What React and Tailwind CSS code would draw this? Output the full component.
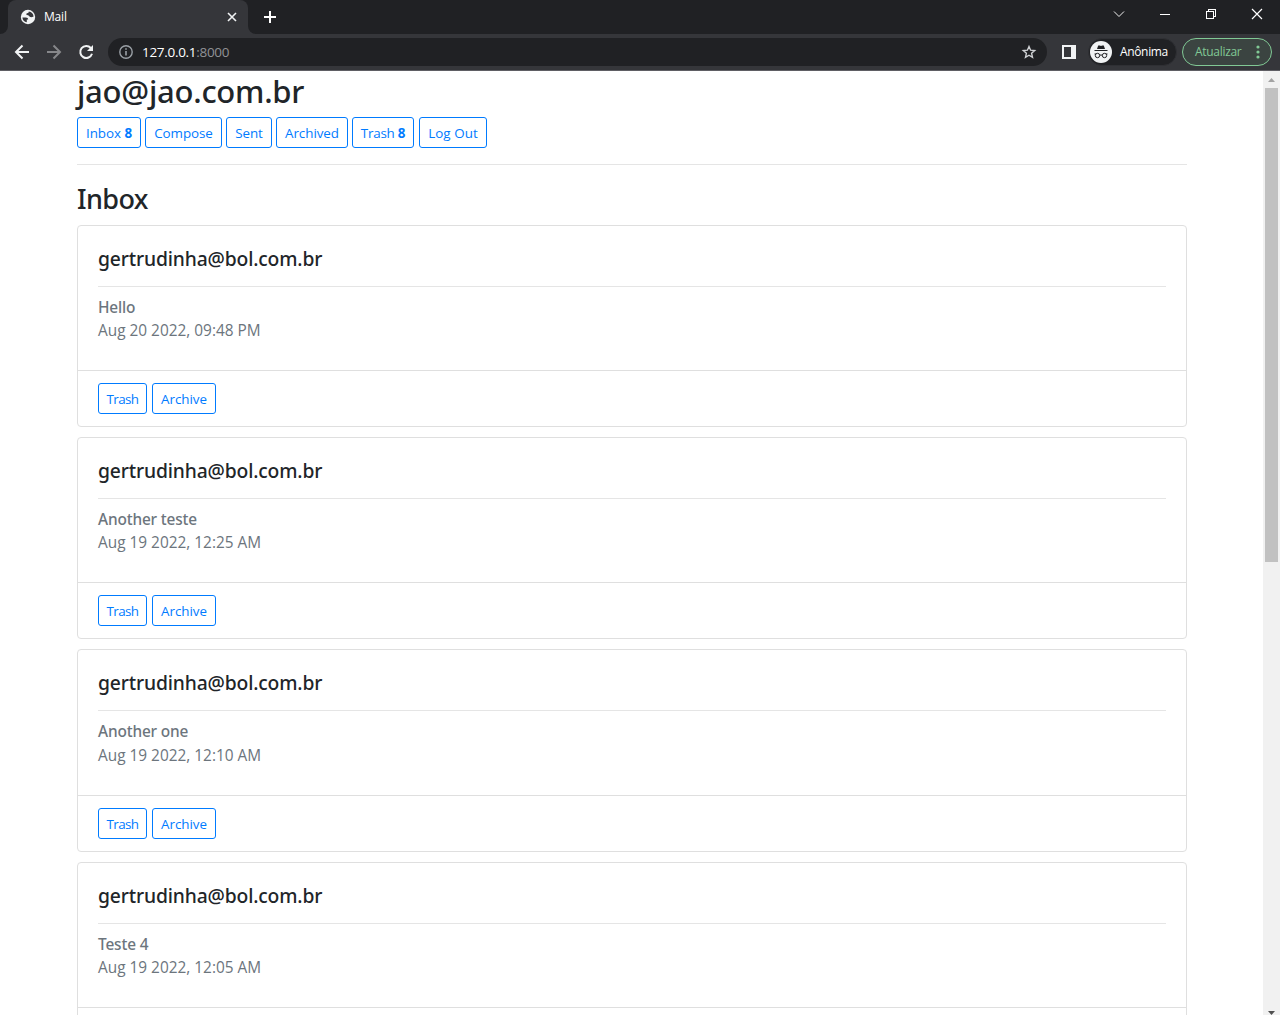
const nav = [
  { label: 'Inbox', count: 8, size: 'w-16 tracking-[-0.05px]', gap: 'mr-1' },
  { label: 'Compose', size: 'w-[77px] tracking-[-0.05px]', gap: 'mr-1' },
  { label: 'Sent', size: 'w-[46px] tracking-[-0.05px]', gap: 'mr-1' },
  { label: 'Archived', size: 'w-[72px] tracking-[-0.05px]', gap: 'mr-1' },
  { label: 'Trash', count: 8, size: 'w-[62px] tracking-[-0.25px]', gap: 'mr-[5px]' },
  { label: 'Log Out', size: 'w-[68px] tracking-[0.05px]', gap: '' },
];

const mails = [
  { from: 'gertrudinha@bol.com.br', subject: 'Hello', date: 'Aug 20 2022, 09:48 PM', body: 'h-[145px]', dateGap: 'mt-[2px]', actions: true },
  { from: 'gertrudinha@bol.com.br', subject: 'Another teste', date: 'Aug 19 2022, 12:25 AM', body: 'h-[145px]', dateGap: 'mt-[2px]', actions: true },
  { from: 'gertrudinha@bol.com.br', subject: 'Another one', date: 'Aug 19 2022, 12:10 AM', body: 'h-[146px]', dateGap: 'mt-[3px]', actions: true },
  { from: 'gertrudinha@bol.com.br', subject: 'Teste 4', date: 'Aug 19 2022, 12:05 AM', body: 'h-[145px]', dateGap: 'mt-[2px]', actions: false },
];

function OutlineButton({ size, gap, children }) {
  return (
    <button className={`flex h-[31px] shrink-0 items-center justify-center whitespace-pre rounded-[3px] border border-[#007bff] pt-[3px] text-[13.4px] leading-none text-[#007bff] ${size} ${gap}`}>
      {children}
    </button>
  );
}

function TabBar() {
  return (
    <div className="flex h-[34px] bg-[#202124] text-white">
      <div className="flex w-2 items-end bg-[#35363a]">
        <div className="h-full w-2 rounded-br-lg bg-[#202124]" />
      </div>
      <div className="flex h-full w-60 items-center rounded-t-lg bg-[#35363a] pl-3 pr-[10px]">
        <svg className="size-4" viewBox="0 0 16 16">
          <circle cx="8" cy="8" r="7.2" fill="#f1f3f4" />
          <path d="M2.400 8.500h3.500c1.500 0 2.300.8 2.300 2.100H6.800v2.700C4.300 12.800 2.500 11 2.400 8.500zM8.800 2.600c0 1-.6 1.500-1.700 1.700-.7.200-.9.700-.7 1.300.3.800 1.200.7 2 .8 1 .2.900 1.400 1.900 1.700.8.300 2.100 0 3.300-.6C13.300 4.900 11.400 2.800 8.800 2.600z" fill="#35363a" />
        </svg>
        <span className="ml-2 flex-1 text-[12px] leading-4 tracking-[-0.2px]">Mail</span>
        <svg className="size-3" viewBox="0 0 12 12" stroke="#f1f3f4" strokeWidth="1.6">
          <path d="M2 2l8 8M10 2l-8 8" />
        </svg>
      </div>
      <div className="w-2 bg-[#35363a]">
        <div className="h-full rounded-bl-lg bg-[#202124]" />
      </div>
      <svg className="ml-2 mt-[11px] size-3" viewBox="0 0 12 12" stroke="#fff" strokeWidth="2">
        <path d="M6 0v12M0 6h12" />
      </svg>
      <div className="ml-auto flex h-7 items-center">
        <svg className="mr-[34px] size-3" viewBox="0 0 12 12" fill="none" stroke="#f0f0f0">
          <path d="M1 3.500l5 5 5-5" />
        </svg>
        <svg className="mr-[34px] size-3" viewBox="0 0 12 12" stroke="#fff" shapeRendering="crispEdges">
          <path d="M1 6.500h10" />
        </svg>
        <svg className="mr-[34px] size-3" viewBox="0 0 12 12" fill="none" stroke="#fff" shapeRendering="crispEdges">
          <path d="M1.500 3.500h7v7h-7zM3.500 3.500v-2h7v7h-2" />
        </svg>
        <svg className="mr-[17px] size-3" viewBox="0 0 12 12" stroke="#fff" strokeWidth="1.200">
          <path d="M1 1l10 10M11 1L1 11" />
        </svg>
      </div>
    </div>
  );
}

function Toolbar() {
  return (
    <div className="flex h-[37px] items-center border-b border-[#5f5e64] bg-[#35363a]">
      <svg className="ml-[14px] size-4" viewBox="0 0 16 16" fill="none" stroke="#f1f3f4" strokeWidth="2">
        <path d="M15 8H2.500M8.500 1.500L2 8l6.500 6.500" />
      </svg>
      <svg className="ml-4 size-4" viewBox="0 0 16 16" fill="none" stroke="#86878a" strokeWidth="2">
        <path d="M1 8h12.500M7.500 1.500L14 8l-6.500 6.500" />
      </svg>
      <svg className="ml-4 size-4" viewBox="0 0 16 16" fill="none">
        <path d="M12.800 4A6 6 0 1 0 14 9.800" stroke="#f1f3f4" strokeWidth="2" />
        <path d="M15 1v6H9z" fill="#f1f3f4" />
      </svg>
      <div className="ml-[14px] flex h-7 w-[939px] items-center rounded-full bg-[#202124] pl-[11px] pr-[10px]">
        <svg className="size-[14px]" viewBox="0 0 14 14" fill="none" stroke="#9aa0a6" strokeWidth="1.400">
          <circle cx="7" cy="7" r="6.200" />
          <path d="M7 6v4.500M7 3.300v1.500" strokeWidth="1.600" />
        </svg>
        <span className="ml-[9px] flex-1 text-[13.500px] leading-4 tracking-[-0.3px] text-white">
          127.0.0.1<span className="text-[#909296]">:8000</span>
        </span>
        <svg className="size-4" viewBox="0 0 16 16" fill="none" stroke="#d0d2d5" strokeWidth="1.400">
          <path d="M8 2.500l1.600 3.700 4.100.4-3.100 2.700.9 4L8 11.200l-3.500 2.100.9-4-3.100-2.700 4.100-.4z" />
        </svg>
      </div>
      <svg className="ml-[15px] h-[14px] w-[14px]" viewBox="0 0 14 14" shapeRendering="crispEdges">
        <path fillRule="evenodd" d="M0 0h14v14H0zM2 2v10h7V2z" fill="#f1f3f4" />
      </svg>
      <div className="ml-3 flex h-7 w-[89px] items-center rounded-full border border-[#2f3034] bg-[#202124] pl-px">
        <svg className="size-[22px] shrink-0" viewBox="0 0 22 22">
          <circle cx="11" cy="11" r="11" fill="#f1f3f4" />
          <path d="M7 8l1.200-3.500h1.600l1.200.5 1.200-.5h1.600L15 8z" fill="#202124" />
          <path d="M4.500 9.500h13" stroke="#202124" />
          <g fill="none" stroke="#202124">
            <circle cx="7.500" cy="14.500" r="2.200" />
            <circle cx="14.500" cy="14.500" r="2.200" />
            <path d="M9.700 14.300q1.300-.8 2.600 0M4.500 13h1.500M16 13h1.500" />
          </g>
        </svg>
        <span className="ml-2 text-[12px] leading-4 tracking-[-0.35px] text-white">Anônima</span>
      </div>
      <div className="ml-[5px] flex h-7 w-[90px] items-center rounded-full border border-[#81c995] bg-[#3b4441] pl-3 text-[#81c995]">
        <span className="w-[61px] text-[12px] leading-4 tracking-[-0.3px]">Atualizar</span>
        <svg className="h-[14px] w-1" viewBox="0 0 4 14" fill="#81c995">
          <circle cx="2" cy="2" r="1.600" />
          <circle cx="2" cy="7" r="1.600" />
          <circle cx="2" cy="12" r="1.600" />
        </svg>
      </div>
    </div>
  );
}

function MailCard({ mail }) {
  return (
    <article className="mb-[10px] shrink-0 rounded border border-[#dfdfdf]">
      <div className={`flex flex-col border-b border-[#dfdfdf] px-5 pt-[21px] ${mail.body}`}>
        <h5 className="h-6 whitespace-nowrap font-['Noto_Sans',sans-serif] text-[19.3px] font-medium leading-6 tracking-[-0.15px] text-[#212529]">{mail.from}</h5>
        <hr className="mt-[15px] border-[#e5e5e5]" />
        <h6 className="mt-[11px] h-[19px] font-['Noto_Sans',sans-serif] text-[15.4px] font-medium leading-[19px] tracking-[-0.15px] text-[#6c757d]">{mail.subject}</h6>
        <p className={`text-[15.4px] leading-6 text-[#6c757d] ${mail.dateGap}`}>{mail.date}</p>
      </div>
      <div className="flex h-[55px] pl-5 pt-3">
        {mail.actions && (
          <>
            <OutlineButton size="w-[49px] tracking-[-0.6px]" gap="mr-[5px]">Trash</OutlineButton>
            <OutlineButton size="w-16 tracking-[-0.05px]" gap="">Archive</OutlineButton>
          </>
        )}
      </div>
    </article>
  );
}

function Scrollbar() {
  return (
    <div className="flex w-[17px] shrink-0 flex-col items-center bg-[#f1f1f1]">
      <svg className="h-[17px] w-[17px]" viewBox="0 0 17 17" fill="#a3a3a3">
        <path d="M5 11l3.500-4L12 11z" />
      </svg>
      <div className="h-[474px] w-[13px] bg-[#c1c1c1]" />
      <svg className="mt-auto h-1 w-[17px]" viewBox="0 0 17 4" fill="#505050">
        <path d="M5 0h7L8.500 4z" />
      </svg>
    </div>
  );
}

export default function App() {
  return (
    <div className="flex h-[1015px] w-[1280px] flex-col overflow-hidden bg-white font-['Open_Sans','Noto_Sans',sans-serif]">
      <TabBar />
      <Toolbar />
      <div className="flex min-h-0 flex-1">
        <main className="flex min-w-0 flex-1 flex-col overflow-hidden pl-[77px] pr-[76px]">
          <h2 className="h-[46px] shrink-0 whitespace-nowrap font-['Noto_Sans',sans-serif] text-[31px] font-medium leading-10 tracking-[-0.25px] text-[#212529]">jao@jao.com.br</h2>
          <nav className="flex shrink-0">
            {nav.map((item) => (
              <OutlineButton key={item.label} size={item.size} gap={item.gap}>
                {item.label}
                {item.count && <strong> {item.count}</strong>}
              </OutlineButton>
            ))}
          </nav>
          <hr className="mt-4 shrink-0 border-[#e5e5e5]" />
          <h3 className="mb-[9px] mt-[17px] h-[34px] shrink-0 font-['Noto_Sans',sans-serif] text-[27px] font-medium leading-[34px] tracking-[-0.6px] text-[#212529]">Inbox</h3>
          {mails.map((mail) => (
            <MailCard key={mail.date} mail={mail} />
          ))}
        </main>
        <Scrollbar />
      </div>
    </div>
  );
}
